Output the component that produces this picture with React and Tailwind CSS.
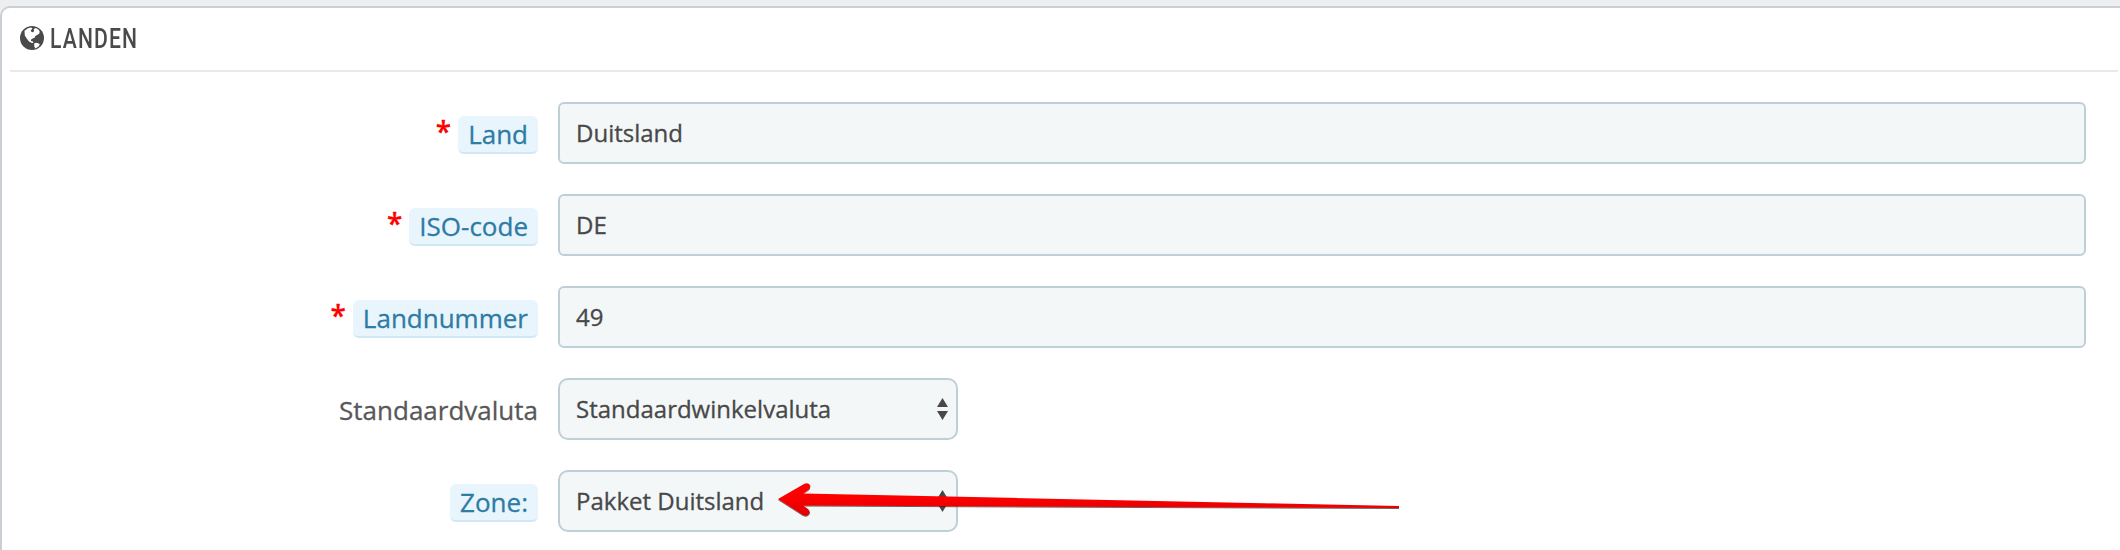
const font = "font-['Open_Sans',sans-serif]";

function Globe() {
  return (
    <svg viewBox="0 0 24 24" className="h-6 w-6 shrink-0">
      <circle cx="12" cy="12" r="12" fill="#4a4a4a" />
      <path fill="#fff" d="M4.500 4.800 8 2.300l3-.8 1.500.8-1 1.400-.8.600.8 1.600 1.700.3.900-1.400-.3-1.700 2-1.100 2.700 1.600 1.200 2-.5 2.200-1.700.9-2.200 1.400-.7 1.700-2 .8-1.500.8-.1 1.700 1.700.1.700 1.700-1.500.1-2.900-1.600-2.300-3-1.900-2.900Z" />
      <path fill="#fff" d="m14.200 17.300 2.400-.6 3.200 1.300-1 2.200-3.300 2.200-1.200-1.800Z" />
    </svg>
  );
}

function Field({ label, required, hint, children }) {
  return (
    <div className="flex h-[62px]">
      <div className="flex w-[536px] shrink-0 items-start justify-end pt-[14px] text-[26px] leading-9 [-webkit-text-stroke:0.3px]">
        {required && <span className="-mt-[3px] mr-[7px] text-[28px] font-semibold text-[#ff0000]">*</span>}
        {hint ? (
          <span className="h-[38px] rounded-md border-b-2 border-[#d0e8f5] bg-[#e9f5fc] px-[10px] text-[#2e7ba5]">{label}</span>
        ) : (
          <span className="text-[#585858]">{label}</span>
        )}
      </div>
      {children}
    </div>
  );
}

function Input({ value }) {
  return (
    <div className="ml-5 mr-[34px] flex flex-1 items-center rounded-md border-2 border-[#bfcfd7] bg-[#f3f7f8] px-4 text-2xl text-[#484848] [-webkit-text-stroke:0.3px]">
      {value}
    </div>
  );
}

function Select({ value, children }) {
  return (
    <div className="relative ml-5 flex w-[400px] items-center justify-between rounded-[10px] border-2 border-[#bfcfd7] bg-[#f3f7f8] pl-4 pr-2 text-2xl text-[#484848] [-webkit-text-stroke:0.3px]">
      <span>{value}</span>
      <svg viewBox="0 0 11 22" className="h-[22px] w-[11px]" fill="#484848">
        <path d="M5.500 0 11 9H0ZM0 13h11l-5.500 9Z" />
      </svg>
      {children}
    </div>
  );
}

function Arrow() {
  return (
    <svg viewBox="0 0 624 40" className="absolute left-[217px] top-[9px] h-10 w-[624px]">
      <defs>
        <linearGradient id="red" x1="0" y1="0" x2="0" y2="1">
          <stop offset="0.4" stopColor="#ff0000" />
          <stop offset="1" stopColor="#dc0000" />
        </linearGradient>
        <filter id="shade" x="-5%" y="-20%" width="110%" height="150%">
          <feDropShadow dx="0" dy="1" stdDeviation="0.5" floodColor="#000" floodOpacity="0.6" />
        </filter>
      </defs>
      <path
        fill="url(#red)"
        filter="url(#shade)"
        d="M1 18 27 3Q31 1 33 4Q34 7 31 9L26 12.500 622 25V27L26 24.500 31 28Q34 31 32 33Q30 36 26 34Z"
      />
    </svg>
  );
}

export default function App() {
  return (
    <div className={`h-[550px] w-full overflow-hidden bg-[#edeef0] pt-1.5 ${font}`}>
      <main className="h-[560px] rounded-tl-[10px] border-l-2 border-t-2 border-[#c9cfd4] bg-white">
        <header className="ml-2 mr-0.5 flex h-16 items-start border-b-2 border-[#e9e9e9] pl-[10px] pt-[18px]">
          <Globe />
          <h1 className="ml-1.5 origin-left scale-x-[0.755] font-['Roboto',sans-serif] text-[28px] font-medium leading-[26px] tracking-[1.5px] text-[#4a4a4a]">LANDEN</h1>
        </header>
        <form className="mt-[30px] flex flex-col gap-[30px]">
          <Field label="Land" required hint><Input value="Duitsland" /></Field>
          <Field label="ISO-code" required hint><Input value="DE" /></Field>
          <Field label="Landnummer" required hint><Input value="49" /></Field>
          <Field label="Standaardvaluta"><Select value="Standaardwinkelvaluta" /></Field>
          <Field label="Zone:" hint><Select value="Pakket Duitsland"><Arrow /></Select></Field>
        </form>
      </main>
    </div>
  );
}
